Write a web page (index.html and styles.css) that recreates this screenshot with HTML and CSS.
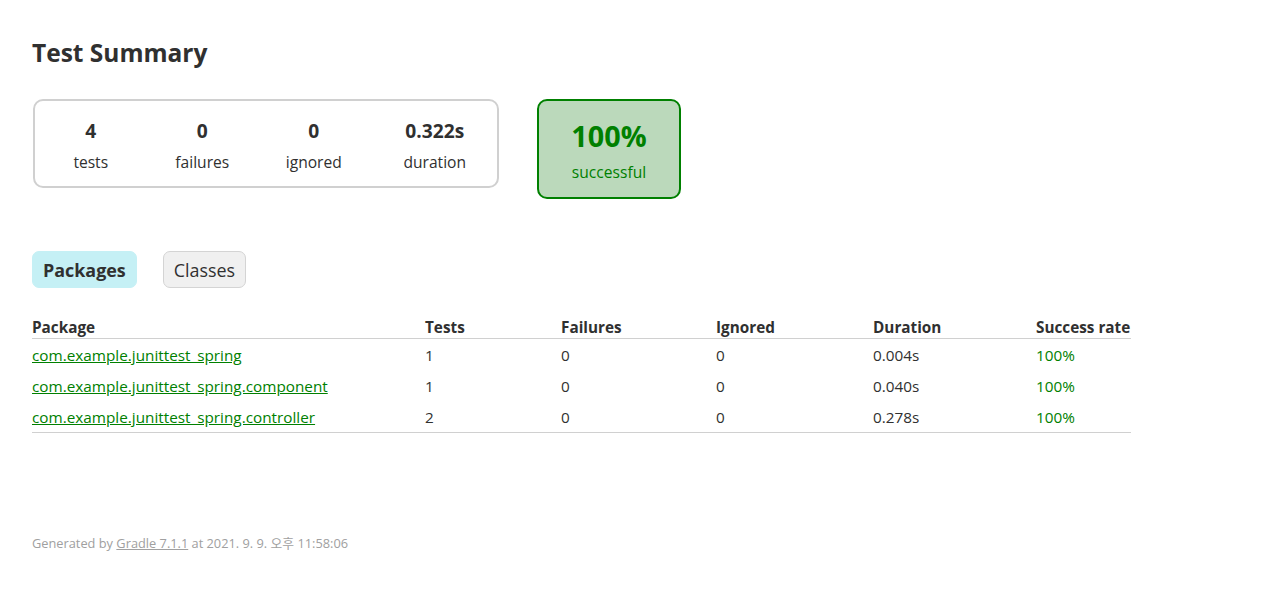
FILE: index.html
```html
<!DOCTYPE html>
<html lang="ko">
<head>
<meta charset="utf-8">
<title>Test results - Test Summary</title>
<link rel="stylesheet" href="styles.css">
</head>
<body>
<div class="content">
  <h1 class="title">Test Summary</h1>
  <div class="summary">
    <div class="summary-group">
      <div class="info-box">
        <div class="counter">4</div>
        <p class="label">tests</p>
      </div>
      <div class="info-box">
        <div class="counter">0</div>
        <p class="label">failures</p>
      </div>
      <div class="info-box">
        <div class="counter">0</div>
        <p class="label">ignored</p>
      </div>
      <div class="info-box info-duration">
        <div class="counter">0.322s</div>
        <p class="label">duration</p>
      </div>
    </div>
    <div class="success-rate">
      <div class="percent">100%</div>
      <p class="label">successful</p>
    </div>
  </div>
  <ul class="tab-links">
    <li class="tab selected"><a href="#">Packages</a></li>
    <li class="tab"><a href="#">Classes</a></li>
  </ul>
  <table class="packages">
    <colgroup>
      <col class="c-package">
      <col class="c-tests">
      <col class="c-failures">
      <col class="c-ignored">
      <col class="c-duration">
      <col class="c-rate">
    </colgroup>
    <thead>
      <tr><th>Package</th><th>Tests</th><th>Failures</th><th>Ignored</th><th>Duration</th><th>Success rate</th></tr>
    </thead>
    <tbody>
      <tr><td class="pkg"><a href="#">com.example.junittest_spring</a></td><td>1</td><td>0</td><td>0</td><td>0.004s</td><td class="ok">100%</td></tr>
      <tr><td class="pkg"><a href="#">com.example.junittest_spring.component</a></td><td>1</td><td>0</td><td>0</td><td>0.040s</td><td class="ok">100%</td></tr>
      <tr><td class="pkg"><a href="#">com.example.junittest_spring.controller</a></td><td>2</td><td>0</td><td>0</td><td>0.278s</td><td class="ok">100%</td></tr>
    </tbody>
  </table>
  <div class="footer">Generated by <a href="#">Gradle 7.1.1</a> at 2021. 9. 9. 오후 11:58:06</div>
</div>
</body>
</html>
```

FILE: styles.css
```css
html, body {
  margin: 0;
  padding: 0;
  background: #ffffff;
}

body {
  font-family: "Open Sans", "Noto Sans CJK KR", sans-serif;
  font-size: 16px;
  color: #303030;
}

.content {
  padding: 37px 32px 40px 32px;
}

.title {
  margin: 0;
  font-size: 24.5px;
  line-height: 32px;
  font-weight: 700;
}

.summary {
  display: flex;
  align-items: flex-start;
  margin-top: 30px;
  margin-left: 1px;
}

.summary-group {
  display: flex;
  gap: 2px;
  width: 462px;
  border: 2px solid #d0d0d0;
  border-radius: 10px;
}

.info-box {
  width: 110px;
  padding: 17px 0 13px 0;
  text-align: center;
}

.info-box:first-child {
  margin-left: 1px;
}

.info-duration {
  width: 125px;
  margin-left: 2px;
}

.counter {
  font-size: 19.2px;
  font-weight: 700;
  line-height: 26px;
  margin-bottom: 7px;
}

.label {
  margin: 0;
  line-height: 22px;
  font-size: 15.6px;
}

.success-rate {
  width: 140px;
  margin-left: 38px;
  padding: 17px 0 13px 0;
  text-align: center;
  background: #bbd9bb;
  border: 2px solid #008000;
  border-radius: 10px;
  color: #008000;
}

.success-rate .label {
  padding-bottom: 1px;
}

.percent {
  font-size: 28.8px;
  font-weight: 700;
  line-height: 36px;
  margin-bottom: 7px;
}

.tab-links {
  display: flex;
  list-style: none;
  margin: 52px 0 0 0;
  padding: 0;
}

.tab {
  padding: 6px 10px 4px 10px;
  margin-right: 26px;
  border: 1px solid #d4d4d4;
  border-radius: 7px;
  background: #f0f0f0;
}

.tab a {
  display: block;
  font-size: 17.9px;
  line-height: 25px;
  color: #303030;
  text-decoration: none;
}

.tab.selected {
  background: #c5f0f5;
  border-color: #c5f0f5;
}

.tab.selected a {
  font-weight: 700;
}

.packages {
  margin-top: 29px;
  width: 1099px;
  table-layout: fixed;
  border-collapse: collapse;
  border-bottom: 1px solid #d0d0d0;
  font-size: 15.3px;
}

.c-package { width: 393px; }
.c-tests { width: 136px; }
.c-failures { width: 155px; }
.c-ignored { width: 157px; }
.c-duration { width: 163px; }
.c-rate { width: 95px; }

.packages th {
  text-align: left;
  white-space: nowrap;
  padding: 0;
  line-height: 21px;
  font-weight: 700;
  border-bottom: 1px solid #d0d0d0;
}

.packages td {
  white-space: nowrap;
  padding: 6px 0 4px 0;
  line-height: 21px;
}

.packages td.pkg a {
  color: #008000;
  text-decoration: underline;
}

.packages td.ok {
  color: #008000;
}

.footer {
  margin-top: 101px;
  font-size: 12.8px;
  line-height: 18px;
  color: #a0a0a0;
  white-space: nowrap;
}

.footer a {
  color: #a0a0a0;
  text-decoration: underline;
}
```
